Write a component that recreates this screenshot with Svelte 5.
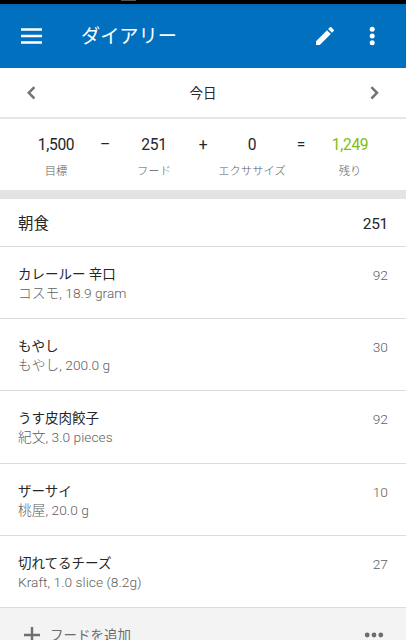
<script lang="ts">
  type Entry = { name: string; detail: string; calories: number };

  const totals = [
    { value: "1,500", label: "目標", operator: "–" },
    { value: "251", label: "フード", operator: "+" },
    { value: "0", label: "エクササイズ", operator: "=" },
    { value: "1,249", label: "残り", operator: "", remaining: true },
  ];

  const entries: Entry[] = [
    { name: "カレールー 辛口", detail: "コスモ, 18.9 gram", calories: 92 },
    { name: "もやし", detail: "もやし, 200.0 g", calories: 30 },
    { name: "うす皮肉餃子", detail: "紀文, 3.0 pieces", calories: 92 },
    { name: "ザーサイ", detail: "桃屋, 20.0 g", calories: 10 },
    { name: "切れてるチーズ", detail: "Kraft, 1.0 slice (8.2g)", calories: 27 },
  ];
</script>

<div class="screen">
  <div class="status-bar"><span class="notch"></span></div>

  <header class="app-bar">
    <button type="button" class="menu" aria-label="メニュー">
      <svg width="22" height="16" viewBox="0 0 22 16"><path d="M0 1.5h21M0 8h21M0 14.5h21" stroke="currentColor" stroke-width="2.5" /></svg>
    </button>
    <h1>ダイアリー</h1>
    <button type="button" class="edit" aria-label="編集">
      <svg width="18" height="18" viewBox="3 3 18 18">
        <path fill="currentColor" d="M3 17.25V21h3.75L17.81 9.94l-3.75-3.75L3 17.25zM20.71 7.04a1 1 0 0 0 0-1.41l-2.34-2.34a1 1 0 0 0-1.41 0l-1.83 1.83 3.75 3.75 1.83-1.83z" />
      </svg>
    </button>
    <button type="button" class="more" aria-label="その他">
      <svg width="6" height="20" viewBox="0 0 6 20" fill="currentColor">
        <circle cx="3.2" cy="3.2" r="2.5" /><circle cx="3.2" cy="10" r="2.5" /><circle cx="3.2" cy="16.8" r="2.5" />
      </svg>
    </button>
  </header>

  <nav class="date-bar">
    <button type="button" aria-label="前日">
      <svg width="9" height="14" viewBox="0 0 9 14"><path d="M7.4 1.1 1.8 6.8l5.6 5.7" /></svg>
    </button>
    <span>今日</span>
    <button type="button" aria-label="翌日">
      <svg width="9" height="14" viewBox="0 0 9 14"><path d="M1.4 1.1 7 6.8l-5.6 5.7" /></svg>
    </button>
  </nav>

  <section class="summary">
    {#each totals as total}
      <div class="total" class:remaining={total.remaining}>
        <span class="value">{total.value}</span>
        <span class="label">{total.label}</span>
      </div>
      {#if total.operator}
        <span class="operator">{total.operator}</span>
      {/if}
    {/each}
  </section>

  <section class="meal">
    <div class="meal-header">
      <h2>朝食</h2>
      <span>251</span>
    </div>

    {#each entries as entry}
      <div class="entry">
        <div class="entry-text">
          <span class="name">{entry.name}</span>
          <span class="detail">{entry.detail}</span>
        </div>
        <span class="calories">{entry.calories}</span>
      </div>
    {/each}

    <div class="meal-footer">
      <button type="button" class="add">
        <svg width="16" height="16" viewBox="0 0 16 16"><path d="M8 0v16M0 8h16" stroke="currentColor" stroke-width="2.4" /></svg>
        <span>フードを追加</span>
      </button>
      <button type="button" class="options" aria-label="オプション">
        <svg width="20" height="6" viewBox="0 0 20 6" fill="currentColor">
          <circle cx="3.2" cy="3" r="2.4" /><circle cx="10" cy="3" r="2.4" /><circle cx="16.8" cy="3" r="2.4" />
        </svg>
      </button>
    </div>
  </section>
</div>

<style>
  :global(body) {
    margin: 0;
    background: #fff;
  }

  .screen {
    width: 100%;
    height: 640px;
    overflow: hidden;
    background: #fff;
    color: #262626;
    font-family: Roboto, "Noto Sans CJK JP", sans-serif;
    font-size: 13.5px;
  }

  button {
    display: flex;
    align-items: center;
    padding: 0;
    border: 0;
    background: none;
    color: inherit;
    font: inherit;
  }

  svg {
    display: block;
  }

  .status-bar {
    height: 4px;
    background: #000;
  }

  .notch {
    display: block;
    width: 15px;
    height: 1px;
    margin-left: 121px;
    background: #555;
  }

  .app-bar {
    display: flex;
    align-items: center;
    box-sizing: border-box;
    height: 64px;
    padding: 0 31px 0 21px;
    background: linear-gradient(#0866a6, #0070bf 3px);
    color: #fff;
  }

  h1 {
    flex: 1;
    margin: 0 0 0 38px;
    padding-top: 2px;
    font-size: 19.2px;
    font-weight: 400;
    line-height: 28px;
  }

  .more {
    margin-left: 35px;
  }

  .date-bar {
    display: flex;
    align-items: center;
    justify-content: space-between;
    box-sizing: border-box;
    height: 51px;
    padding: 0 27px;
    border-bottom: 2px solid #e6e6e6;
  }

  .date-bar span {
    padding-bottom: 2px;
  }

  .date-bar path {
    fill: none;
    stroke: #747474;
    stroke-width: 2.5;
  }

  .summary {
    display: grid;
    grid-template-columns: 86px 12px 86px 12px 86px 12px 86px;
    justify-content: center;
    box-sizing: border-box;
    height: 80px;
    padding-top: 16px;
    border-bottom: 9px solid #e3e3e3;
  }

  .total {
    display: flex;
    flex-direction: column;
    align-items: center;
    white-space: nowrap;
  }

  .value,
  .operator {
    font-size: 15.6px;
    letter-spacing: -0.3px;
    line-height: 20px;
    text-align: center;
  }

  .label {
    margin-top: 9px;
    color: #5e5e5e;
    font-size: 11.3px;
    font-weight: 300;
    line-height: 16px;
  }

  .remaining .value {
    color: #7fbd12;
  }

  .meal-header {
    display: flex;
    align-items: center;
    justify-content: space-between;
    box-sizing: border-box;
    height: 48px;
    padding: 0 18px;
    border-bottom: 1px solid #dcdcdc;
    font-size: 15.5px;
  }

  .meal-header span {
    padding-top: 2px;
    letter-spacing: -0.3px;
  }

  h2 {
    margin: 0;
    padding-bottom: 2px;
    font-size: inherit;
    font-weight: 400;
  }

  .entry {
    display: flex;
    justify-content: space-between;
    box-sizing: border-box;
    height: 72.2px;
    padding: 18px 18px 0;
    border-bottom: 1px solid #dcdcdc;
  }

  .entry-text {
    display: flex;
    flex-direction: column;
    line-height: 19px;
  }

  .detail,
  .calories {
    color: #5e5e5e;
    font-size: 13.7px;
    font-weight: 300;
    letter-spacing: 0.05px;
  }

  .calories {
    line-height: 20px;
  }

  .meal-footer {
    display: flex;
    align-items: center;
    justify-content: space-between;
    height: 54px;
    padding: 0 22px 0 24px;
    background: #f3f3f3;
    color: #6d6d6d;
  }

  .add {
    gap: 10px;
  }

  .add span {
    padding-bottom: 2px;
  }
</style>
